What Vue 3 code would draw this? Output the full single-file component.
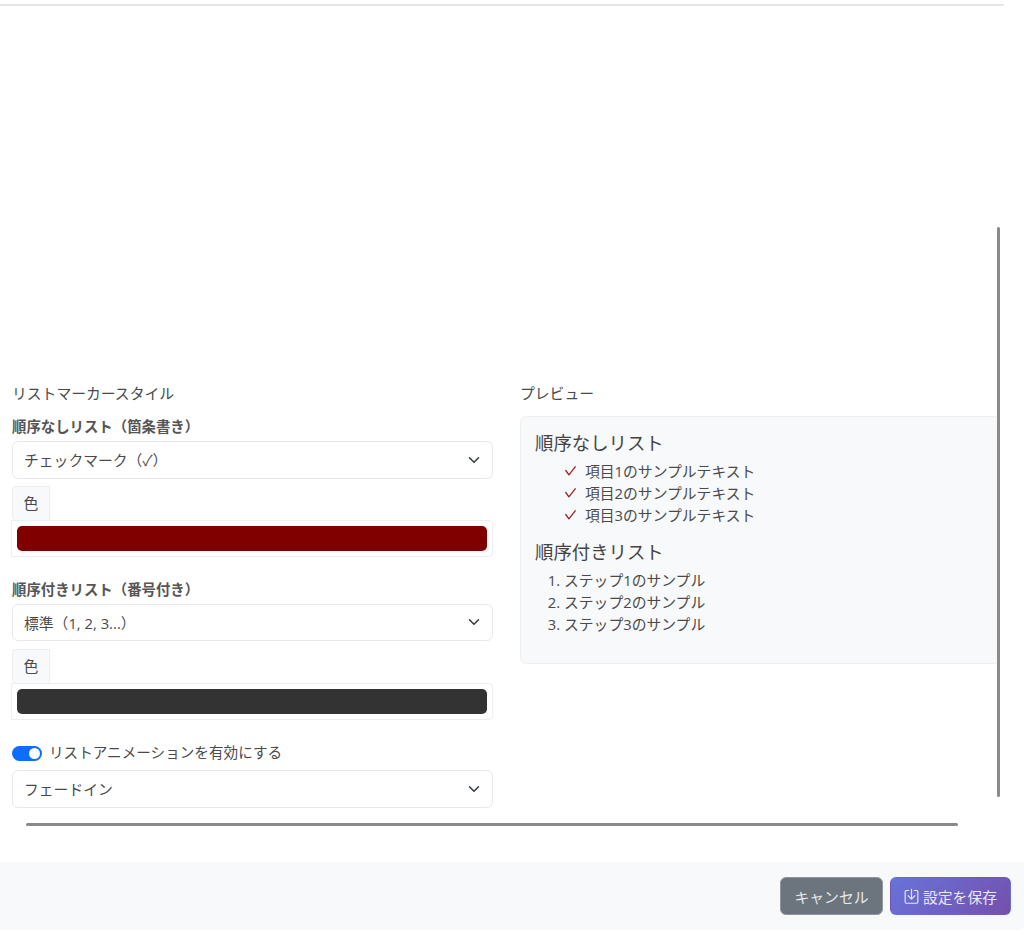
<script setup>
const bullets = ['項目1のサンプルテキスト', '項目2のサンプルテキスト', '項目3のサンプルテキスト']
const steps = ['ステップ1のサンプル', 'ステップ2のサンプル', 'ステップ3のサンプル']
</script>

<template>
  <div class="modal">
    <main class="body">
      <hr class="rule" />
      <div class="columns">
        <section class="col">
          <h6 class="section-label">リストマーカースタイル</h6>
          <div class="group">
            <label class="field-label">順序なしリスト（箇条書き）</label>
            <div class="select">
              <span>チェックマーク（✓）</span>
              <svg class="chev" viewBox="0 0 16 16" fill="none" stroke="#343a40" stroke-width="2" stroke-linecap="round" stroke-linejoin="round"><path d="m2 5 6 6 6-6" /></svg>
            </div>
            <span class="color-tag">色</span>
            <div class="color-box"><div class="swatch swatch-red"></div></div>
          </div>
          <div class="group">
            <label class="field-label">順序付きリスト（番号付き）</label>
            <div class="select">
              <span>標準（1, 2, 3...）</span>
              <svg class="chev" viewBox="0 0 16 16" fill="none" stroke="#343a40" stroke-width="2" stroke-linecap="round" stroke-linejoin="round"><path d="m2 5 6 6 6-6" /></svg>
            </div>
            <span class="color-tag">色</span>
            <div class="color-box"><div class="swatch swatch-dark"></div></div>
          </div>
          <div class="switch-row">
            <span class="switch"><span class="knob"></span></span>
            <span class="switch-text">リストアニメーションを有効にする</span>
          </div>
          <div class="select">
            <span>フェードイン</span>
            <svg class="chev" viewBox="0 0 16 16" fill="none" stroke="#343a40" stroke-width="2" stroke-linecap="round" stroke-linejoin="round"><path d="m2 5 6 6 6-6" /></svg>
          </div>
        </section>
        <section class="col col-right">
          <h6 class="section-label">プレビュー</h6>
          <div class="preview">
            <h5>順序なしリスト</h5>
            <ul>
              <li v-for="b in bullets" :key="b">
                <svg class="tick" viewBox="0 0 11 10" fill="none" stroke="#a02020" stroke-width="1.3" stroke-linecap="round" stroke-linejoin="round"><path d="M.8 4.500 3.900 8.800 10.200 .8" /></svg>
                <span>{{ b }}</span>
              </li>
            </ul>
            <h5>順序付きリスト</h5>
            <ol>
              <li v-for="s in steps" :key="s">{{ s }}</li>
            </ol>
          </div>
        </section>
      </div>
      <div class="scroll-v"></div>
      <div class="scroll-h"></div>
    </main>
    <footer class="footer">
      <button class="btn btn-cancel">キャンセル</button>
      <button class="btn btn-save">
        <svg class="save-icon" viewBox="1.500 1 13 13.500" fill="currentColor">
          <path d="M3.500 2.500A1.500 1.500 0 0 0 2 4v9a1.500 1.500 0 0 0 1.500 1.500h9A1.500 1.500 0 0 0 14 13V4a1.500 1.500 0 0 0-1.500-1.500h-2a.5.5 0 0 0 0 1h2a.5.5 0 0 1 .5.5v9a.5.5 0 0 1-.5.5h-9A.5.5 0 0 1 3 13V4a.5.5 0 0 1 .5-.5h2a.5.5 0 0 0 0-1h-2z" />
          <path d="M8 1.500a.5.5 0 0 1 .5.5v7.300l2.150-2.150a.5.5 0 0 1 .7.7l-3 3a.5.5 0 0 1-.7 0l-3-3a.5.5 0 0 1 .7-.7L7.500 9.300V2a.5.5 0 0 1 .5-.5z" />
        </svg>
        <span>設定を保存</span>
      </button>
    </footer>
  </div>
</template>

<style>
body { background: #fff; }
</style>

<style scoped>
.modal {
  width: 1024px;
  height: 930px;
  display: flex;
  flex-direction: column;
  font-family: "Open Sans", "Noto Sans CJK JP", sans-serif;
  font-size: 14.8px;
  color: #4a4a4a;
  background: #fff;
  overflow: hidden;
}
.body {
  position: relative;
  flex: 1;
  min-height: 0;
  padding-top: 4px;
}
.rule {
  width: 1004px;
  height: 2px;
  margin: 0 0 376px;
  border: 0;
  background: #e5e5e8;
}
.columns {
  display: flex;
  gap: 27px;
  padding-left: 12px;
}
.col { width: 481px; flex: none; }
.col-right { width: 480px; }
.section-label {
  margin: 0 0 12px;
  font-size: 14.8px;
  font-weight: 400;
  line-height: 22px;
  color: #4a4a4a;
}
.group { margin-bottom: 21.5px; }
.group:nth-of-type(2) { margin-bottom: 22.5px; }
.field-label {
  display: block;
  margin-bottom: 3px;
  font-size: 14.4px;
  font-weight: 700;
  line-height: 22px;
  color: #555;
}
.select {
  display: flex;
  align-items: center;
  justify-content: space-between;
  box-sizing: border-box;
  height: 37.5px;
  padding: 0 12px 0 11px;
  border: 1px solid #e6e8ea;
  border-radius: 6px;
  background: #fff;
}
.chev { width: 12px; height: 12px; }
.color-tag {
  display: flex;
  align-items: center;
  justify-content: center;
  box-sizing: border-box;
  width: 38px;
  height: 34px;
  margin-top: 7.5px;
  padding-bottom: 2px;
  border: 1px solid #eceef0;
  border-bottom: 0;
  border-radius: 4px 0 0 4px;
  background: #f8f9fa;
}
.color-box {
  box-sizing: border-box;
  height: 37px;
  margin-left: -1px;
  padding: 5px;
  border: 1px solid #eceef0;
  border-radius: 0 4px 4px 0;
}
.swatch { height: 25px; border-radius: 5px; }
.swatch-red { background: #800000; }
.swatch-dark { background: #333; }
.switch-row {
  display: flex;
  align-items: center;
  gap: 7px;
  height: 22px;
  margin-bottom: 6px;
}
.switch-text { font-size: 14.6px; padding-bottom: 3px; }
.switch {
  display: flex;
  align-items: center;
  justify-content: flex-end;
  box-sizing: border-box;
  width: 30px;
  height: 15px;
  padding-right: 2px;
  border-radius: 8px;
  background: #0d6efd;
}
.knob {
  width: 11px;
  height: 11px;
  border-radius: 50%;
  background: #fff;
}
.preview {
  box-sizing: border-box;
  height: 248px;
  padding: 13px 14px;
  border: 1px solid #eceef0;
  border-radius: 6px;
  background: #f8f9fa;
}
.preview h5 {
  margin: 0 0 4px;
  font-size: 18.4px;
  font-weight: 400;
  line-height: 26px;
  color: #444;
}
.preview ul {
  margin: 0 0 13px;
  padding: 0 0 0 30px;
  list-style: none;
  line-height: 22px;
}
.preview ul li { display: flex; align-items: center; gap: 9px; }
.tick { width: 11px; height: 10px; flex: none; }
.preview ol {
  margin: 0;
  padding: 0 0 0 29px;
  line-height: 22px;
}
.footer {
  display: flex;
  justify-content: flex-end;
  align-items: center;
  gap: 7px;
  height: 68px;
  padding-right: 13px;
  background: #f8f9fa;
  border-bottom-right-radius: 6px;
}
.btn {
  display: inline-flex;
  align-items: center;
  justify-content: center;
  height: 38px;
  border: 1px solid transparent;
  border-radius: 6px;
  font: inherit;
  color: #fff;
}
.btn-cancel {
  width: 103px;
  background: #6c757d;
  border-color: #8f979d;
  color: #e6e8ea;
}
.btn-save {
  width: 121px;
  gap: 4px;
  background: linear-gradient(135deg, #6873db, #7450ab);
  color: #e8e8f4;
}
.save-icon { width: 15px; height: 16px; }
.scroll-v {
  position: absolute;
  left: 997px;
  top: 227px;
  width: 3px;
  height: 570px;
  border-radius: 2px;
  background: #8a8a8a;
}
.scroll-h {
  position: absolute;
  left: 26px;
  top: 823px;
  width: 932px;
  height: 3px;
  border-radius: 2px;
  background: #8a8a8a;
}
</style>
